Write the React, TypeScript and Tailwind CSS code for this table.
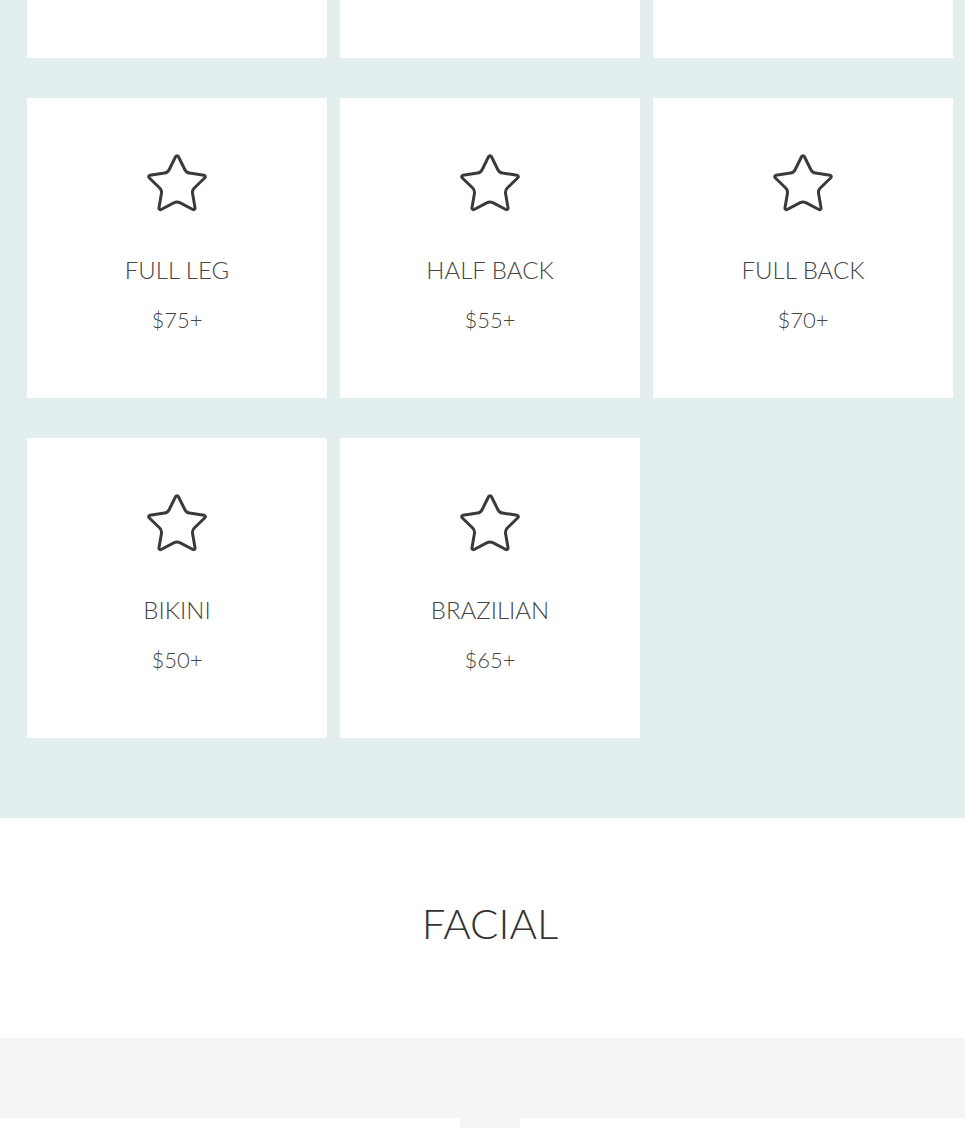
import { Star } from "lucide-react";

type Service = { name: string; price: string };

const services: Service[] = [
  { name: "FULL LEG", price: "$75+" },
  { name: "HALF BACK", price: "$55+" },
  { name: "FULL BACK", price: "$70+" },
  { name: "BIKINI", price: "$50+" },
  { name: "BRAZILIAN", price: "$65+" },
];

function ServiceCard({ name, price }: Service) {
  return (
    <div className="h-[300px] bg-white flex flex-col items-center pt-[52px]">
      <Star size={68} strokeWidth={1.05} className="text-[#3a3a3a]" />
      <div className="mt-[37px] text-[24px] leading-[30px] font-light text-[#444]">
        {name}
      </div>
      <div className="mt-[21px] text-[22px] leading-[28px] font-light text-[#444]">
        {price}
      </div>
    </div>
  );
}

export default function App() {
  return (
    <div className="w-[965px] h-[1128px] overflow-hidden font-['Lato',sans-serif]">
      <section className="bg-[#e3efee] pb-[80px]">
        <div className="-mt-[242px] pl-[27px] grid grid-cols-[300px_300px_300px] gap-x-[13px] gap-y-[40px]">
          {/* previous row, scrolled out of view */}
          <div className="h-[300px] bg-white" />
          <div className="h-[300px] bg-white" />
          <div className="h-[300px] bg-white" />
          {services.map((s) => (
            <ServiceCard key={s.name} {...s} />
          ))}
        </div>
      </section>
      <section className="h-[220px] bg-white flex items-center justify-center pl-[15px] pb-[10px]">
        <h2 className="text-[42px] font-light text-[#333]">FACIAL</h2>
      </section>
      <section className="h-[80px] bg-[#f5f5f5]" />
      <div className="flex justify-center pl-[15px]">
        <div className="w-[60px] h-[11px] bg-[#f5f5f5]" />
      </div>
    </div>
  );
}
